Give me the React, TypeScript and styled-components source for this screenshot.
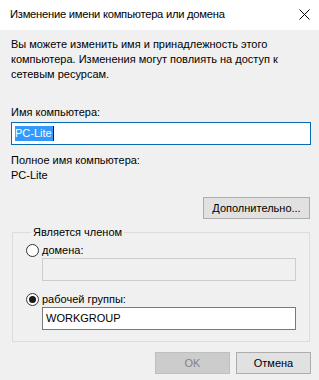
import { ReactElement } from "react";
import styled, { createGlobalStyle } from "styled-components";

const GlobalStyle = createGlobalStyle`
  html, body {
    margin: 0;
    padding: 0;
    background: #f0f0f0;
  }
  body {
    font-family: "Liberation Sans", Arial, sans-serif;
    font-size: 11px;
    color: #000;
  }
`;

const Window = styled.div`
  width: 319px;
  height: 380px;
  background: #f0f0f0;
  overflow: hidden;
`;

const TitleBar = styled.div`
  height: 30px;
  background: #fff;
  display: flex;
  align-items: center;
  justify-content: space-between;
  padding: 0 9px 2px 10px;
  box-sizing: border-box;
`;

const Title = styled.span`
  font-size: 11.2px;
  letter-spacing: -0.25px;
`;

const Body = styled.div`
  padding: 7px 8px 0 11px;
  display: flex;
  flex-direction: column;
`;

const Text = styled.div<{ $top?: number }>`
  line-height: 15px;
  margin-top: ${({ $top }) => $top ?? 0}px;
`;

const TextBox = styled.div<{ $disabled?: boolean; $focused?: boolean; $top?: number }>`
  box-sizing: border-box;
  height: 23px;
  margin-top: ${({ $top }) => $top ?? 0}px;
  padding: 3px 2px 0 3px;
  line-height: 15px;
  background: ${({ $disabled }) => ($disabled ? "#f0f0f0" : "#fff")};
  border: 1px solid
    ${({ $disabled, $focused }) =>
      $disabled ? "#cccccc" : $focused ? "#0a6ab4" : "#7a7a7a"};
`;

const Selected = styled.span`
  display: inline-block;
  background: #3399ff;
  color: #fff;
  border-right: 1px solid #1a1a1a;
  padding: 0 1px 0 0;
  line-height: 15px;
`;

const Button = styled.button<{ $width: number }>`
  box-sizing: border-box;
  width: ${({ $width }) => $width}px;
  height: 22px;
  padding: 0 0 1px;
  font: inherit;
  color: #000;
  background: #e1e1e1;
  border: 1px solid #adadad;
  &:disabled {
    color: #838383;
    background: #cccccc;
    border-color: #bfbfbf;
  }
`;

const MoreRow = styled.div`
  display: flex;
  justify-content: flex-end;
  margin-top: 14px;
  padding-right: 1px;
`;

const Group = styled.fieldset`
  margin: 6px 1px 0 1px;
  padding: 2px 13px 11px 13px;
  border: 1px solid #dcdcdc;
  display: flex;
  flex-direction: column;
`;

const Legend = styled.legend`
  padding: 0 2px;
  margin-left: 5px;
  line-height: 15px;
`;

const RadioRow = styled.label<{ $top?: number }>`
  display: flex;
  align-items: center;
  gap: 3px;
  height: 16px;
  margin-top: ${({ $top }) => $top ?? 0}px;
`;

const RadioCircle = styled.span<{ $checked?: boolean }>`
  box-sizing: border-box;
  width: 13px;
  height: 13px;
  border-radius: 50%;
  border: 1px solid #333;
  background: #fff;
  display: flex;
  align-items: center;
  justify-content: center;
  &::after {
    content: "";
    width: 7px;
    height: 7px;
    border-radius: 50%;
    background: ${({ $checked }) => ($checked ? "#1a1a1a" : "transparent")};
  }
`;

const Indented = styled.div`
  padding-left: 16px;
`;

const Footer = styled.div`
  display: flex;
  justify-content: flex-end;
  gap: 6px;
  margin-top: 10px;
`;

const CloseIcon = () => (
  <svg width="11" height="11" viewBox="0 0 11 11">
    <path d="M0.5 0.5 L10.5 10.5 M10.5 0.5 L0.5 10.5" stroke="#000" strokeWidth="1" />
  </svg>
);

const App = (): ReactElement => {
  return (
    <Window>
      <GlobalStyle />
      <TitleBar>
        <Title>Изменение имени компьютера или домена</Title>
        <CloseIcon />
      </TitleBar>
      <Body>
        <Text>
          Вы можете изменить имя и принадлежность этого
          <br />
          компьютера. Изменения могут повлиять на доступ к
          <br />
          сетевым ресурсам.
        </Text>

        <Text $top={23}>Имя компьютера:</Text>
        <TextBox $focused $top={2}>
          <Selected>PC-Lite</Selected>
        </TextBox>

        <Text $top={8}>Полное имя компьютера:</Text>
        <Text>PC-Lite</Text>

        <MoreRow>
          <Button $width={107}>Дополнительно...</Button>
        </MoreRow>

        <Group>
          <Legend>Является членом</Legend>
          <RadioRow>
            <RadioCircle />
            домена:
          </RadioRow>
          <Indented>
            <TextBox $disabled />
          </Indented>
          <RadioRow $top={10}>
            <RadioCircle $checked />
            рабочей группы:
          </RadioRow>
          <Indented>
            <TextBox>WORKGROUP</TextBox>
          </Indented>
        </Group>

        <Footer>
          <Button $width={75} disabled>
            OK
          </Button>
          <Button $width={75}>Отмена</Button>
        </Footer>
      </Body>
    </Window>
  );
};

export default App;
